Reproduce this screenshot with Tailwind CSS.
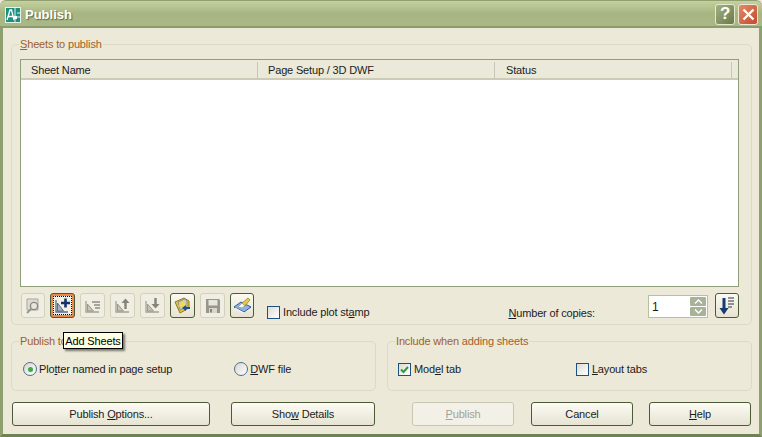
<!DOCTYPE html>
<html>
<head>
<meta charset="utf-8">
<script src="https://cdn.jsdelivr.net/npm/@tailwindcss/browser@4"></script>
</head>
<body class="m-0 overflow-hidden bg-[#ece9d8]">
<div class="relative flex h-[437px] w-[762px] flex-col overflow-hidden font-['Liberation_Sans',Arial,sans-serif] text-[11px] leading-[14px] tracking-[-0.16px] text-[#1c1c1c]">
  <!-- Title bar -->
  <div class="flex h-[28px] shrink-0 items-center rounded-t-[6px] bg-gradient-to-b from-[#c5d2a0] via-[#a6b582] to-[#a9b886] pl-[5px] pr-[4px] border-b-2 border-b-[#8b9c6c] border-t border-t-[#8f9f70]">
    <svg class="mt-[3px] h-[16px] w-[16px] shrink-0" viewBox="0 0 16 16">
      <rect width="16" height="16" fill="#e8f2e4"/>
      <rect x="1" y="1" width="14" height="14" fill="#1d8f82"/>
      <path d="M2 13 L5 3 h1.500 L9 13 M3.500 9.500h4" fill="none" stroke="#fff" stroke-width="1.300"/>
      <path d="M10 1v14M8 10h7M12 6h3" stroke="#dff5ee" stroke-width="1"/>
      <rect x="9" y="9" width="3" height="3" fill="#fff"/>
    </svg>
    <span class="ml-[4px] mt-[3px] text-[13px] font-bold tracking-[0px] text-white [text-shadow:1px_1px_1px_#5c6b40]">Publish</span>
    <div class="ml-auto mt-[1px] flex gap-[3px]">
      <div class="flex h-[21px] w-[20px] items-center justify-center rounded-[3px] border border-[#e3e8cf] bg-gradient-to-br from-[#a3b183] to-[#687a4b] text-[17px] font-bold text-white">?</div>
      <div class="flex h-[21px] w-[20px] items-center justify-center rounded-[3px] border border-[#f0e6d8] bg-gradient-to-br from-[#e48a68] to-[#c2482a]">
        <svg class="h-[15px] w-[15px]" viewBox="0 0 15 15"><path d="M2.500 2.500l10 10M12.500 2.500l-10 10" stroke="#fff" stroke-width="2.400"/></svg>
      </div>
    </div>
  </div>

  <!-- Body -->
  <div class="flex min-h-0 flex-1 flex-col border-x-[3px] border-b-[3px] border-x-[#8fa070] border-b-[#6f8252] pl-[8px] pr-[7px] pt-[8px]">
    <fieldset class="h-[289px] rounded-[5px] border border-[#dcd9c4] pl-[8px] pr-[12px]">
      <legend class="-ml-[1px] h-[16px] px-[1px] leading-[16px] text-[#a0602a]"><u>S</u>heets to publish</legend>
      <!-- list -->
      <div class="mt-[7px] h-[228px] border border-[#8f9f78] bg-white">
        <div class="flex h-[20px] items-center border-b-2 border-b-[#cdcab6] bg-[#ebe9d9] pt-[2px]">
          <div class="w-[237px] border-r border-r-[#c9c7b3] pl-[10px] leading-[16px]">Sheet Name</div>
          <div class="w-[237px] border-r border-r-[#c9c7b3] pl-[10px] leading-[16px]">Page Setup / 3D DWF</div>
          <div class="w-[237px] border-r border-r-[#c9c7b3] pl-[11px] leading-[16px]">Status</div>
        </div>
      </div>
      <!-- toolbar -->
      <div class="mt-[6px] flex h-[25px] items-start">
        <div class="ml-[1px] flex h-[25px] w-[24px] items-center justify-center rounded-[3px] border border-[#d3d0bd] bg-[#f0eee2]">
          <svg class="h-[18px] w-[18px]" viewBox="0 0 18 18"><path d="M3 2h11v11H3z" fill="#dedbd0" stroke="#a9a79b"/><circle cx="10" cy="9" r="3.600" fill="#e8e6dc" stroke="#8a8880" stroke-width="1.400"/><path d="M7 12l-4 4" stroke="#9a988e" stroke-width="2"/></svg>
        </div>
        <div class="ml-[5px] flex h-[25px] w-[25px] items-center justify-center rounded-[3px] border border-[#4d5a38] bg-[#e88a4c] p-[2px]">
          <div class="flex h-full w-full items-center justify-center border border-dotted border-black bg-[#f3f1e6]">
            <svg class="h-[17px] w-[17px]" viewBox="0 0 17 17"><path d="M2 3v12h12" fill="none" stroke="#5a6a88" stroke-width="1.300"/><path d="M3.500 14V6l6 8z" fill="#a9b2c4" stroke="#5c6a88"/><path d="M11.500 1.500v9M7 6h9" stroke="#12326a" stroke-width="2.600"/></svg>
          </div>
        </div>
        <div class="ml-[5px] flex h-[25px] w-[25px] items-center justify-center rounded-[3px] border border-[#d3d0bd] bg-[#f0eee2]">
          <svg class="h-[17px] w-[17px]" viewBox="0 0 17 17"><path d="M2 4v11h13" fill="none" stroke="#a3a192" stroke-width="1.300"/><path d="M3.500 14V7l6 7z" fill="#c6c4b6" stroke="#9b998a"/><path d="M8 5h8M10 8h6M11 11h5" stroke="#8f8d80" stroke-width="1.500"/></svg>
        </div>
        <div class="ml-[5px] flex h-[25px] w-[25px] items-center justify-center rounded-[3px] border border-[#d3d0bd] bg-[#f0eee2]">
          <svg class="h-[17px] w-[17px]" viewBox="0 0 17 17"><path d="M2 4v11h13" fill="none" stroke="#a3a192" stroke-width="1.300"/><path d="M3.500 14V7l6 7z" fill="#c6c4b6" stroke="#9b998a"/><path d="M11.500 12V5" stroke="#85837a" stroke-width="2.400"/><path d="M7.500 6l4-4.500 4 4.500z" fill="#85837a"/></svg>
        </div>
        <div class="ml-[5px] flex h-[25px] w-[25px] items-center justify-center rounded-[3px] border border-[#d3d0bd] bg-[#f0eee2]">
          <svg class="h-[17px] w-[17px]" viewBox="0 0 17 17"><path d="M2 4v11h13" fill="none" stroke="#a3a192" stroke-width="1.300"/><path d="M3.500 14V7l6 7z" fill="#c6c4b6" stroke="#9b998a"/><path d="M11.500 1v7" stroke="#85837a" stroke-width="2.400"/><path d="M7.500 7l4 4.500 4-4.500z" fill="#85837a"/></svg>
        </div>
        <div class="ml-[5px] flex h-[25px] w-[25px] items-center justify-center rounded-[3px] border border-[#4d5a38] bg-gradient-to-b from-[#fbfaf2] to-[#e6e3d2]">
          <svg class="h-[19px] w-[19px]" viewBox="0 0 19 19"><path d="M2 6l9-4 5 3v7l-9 5z" fill="#e8c23a" stroke="#8d7a2a"/><path d="M5 6l7-3 2 2v6l-7 3z" fill="#c8cdb8" stroke="#7f8468" stroke-width=".7"/><path d="M5 10l6-6 2 8z" fill="#f0d860"/><path d="M9 12l4 3v-2h4v-2h-4V9z" fill="#1a4f9c"/></svg>
        </div>
        <div class="ml-[5px] flex h-[25px] w-[25px] items-center justify-center rounded-[3px] border border-[#d3d0bd] bg-[#f0eee2]">
          <svg class="h-[16px] w-[16px]" viewBox="0 0 16 16"><path d="M1 1h13l1 1v13H1z" fill="#98968a"/><rect x="3.500" y="2" width="9" height="5.500" fill="#e8e6dc"/><rect x="4" y="10" width="8" height="5" fill="#d8d6ca"/><rect x="5" y="11" width="2" height="3.500" fill="#85837a"/></svg>
        </div>
        <div class="ml-[5px] flex h-[25px] w-[24px] items-center justify-center rounded-[3px] border border-[#4d5a38] bg-gradient-to-b from-[#fbfaf2] to-[#e6e3d2]">
          <svg class="h-[19px] w-[19px]" viewBox="0 0 19 19"><path d="M1 11l7-5 10 5-7 5z" fill="#8db4e2" stroke="#2c5c9c"/><path d="M2 12l9 5" stroke="#fff"/><path d="M8 8l7-6 2 2-6 7z" fill="#e6c84a" stroke="#8d7a2a" stroke-width=".7"/><path d="M5 11l4-4 3 3-3 2z" fill="#f6f6f0" stroke="#7f8fa8" stroke-width=".7"/></svg>
        </div>
        <div class="ml-[13px] mt-[12px] flex items-center">
          <span class="h-[13px] w-[13px] border border-[#1c5180] bg-gradient-to-br from-[#dcdcd4] to-white"></span>
          <span class="ml-[3px]">Include plot st<u>a</u>mp</span>
        </div>
        <div class="ml-auto mt-[12px] leading-[16px]"><u>N</u>umber of copies:</div>
        <div class="ml-[53px] mt-[2px] flex h-[23px] w-[60px] items-center border border-[#b5c09c] bg-white pl-[3px] pr-[1px]">
          <span class="text-[12px]">1</span>
          <div class="ml-auto flex h-full flex-col justify-center gap-[1px]">
            <div class="flex h-[9px] w-[16px] items-center justify-center rounded-[1px] bg-[#a7b296]"><svg class="h-[5px] w-[9px]" viewBox="0 0 9 5"><path d="M1 4.500l3.500-3.500 3.500 3.500" fill="none" stroke="#fff" stroke-width="1.400"/></svg></div>
            <div class="flex h-[9px] w-[16px] items-center justify-center rounded-[1px] bg-[#a7b296]"><svg class="h-[5px] w-[9px]" viewBox="0 0 9 5"><path d="M1 .5l3.500 3.500 3.500-3.500" fill="none" stroke="#fff" stroke-width="1.400"/></svg></div>
          </div>
        </div>
        <div class="ml-[7px] flex h-[25px] w-[24px] items-center justify-center rounded-[3px] border border-[#4d5a38] bg-gradient-to-b from-[#fbfaf2] to-[#e6e3d2]">
          <svg class="h-[20px] w-[18px]" viewBox="0 0 18 20"><path d="M6 2v11" stroke="#173a70" stroke-width="3"/><path d="M1.500 12h9L6 18.500z" fill="#173a70"/><path d="M10 2h6M10 5h6M10 8h6M10 11h4" stroke="#2c3440" stroke-width="1"/></svg>
        </div>
      </div>
    </fieldset>

    <div class="mt-[8px] flex h-[58px] gap-[11px]">
      <fieldset class="w-[365px] rounded-[5px] border border-[#dcd9c4] pl-[11px]">
        <legend class="-ml-[4px] h-[16px] px-[1px] leading-[16px] text-[#a0602a]">Publish to</legend>
        <div class="mt-[13px] flex items-center">
          <span class="flex h-[14px] w-[14px] items-center justify-center rounded-full border border-[#4d6f94] bg-gradient-to-br from-[#d8d6cc] to-white"><span class="h-[5px] w-[5px] rounded-full bg-[#3fa84a]"></span></span>
          <span class="ml-[2px]">Plo<u>t</u>ter named in page setup</span>
          <span class="ml-[62px] h-[14px] w-[14px] rounded-full border border-[#4d6f94] bg-gradient-to-br from-[#d8d6cc] to-white"></span>
          <span class="ml-[2px]"><u>D</u>WF file</span>
        </div>
      </fieldset>
      <fieldset class="w-[365px] rounded-[5px] border border-[#dcd9c4] pl-[10px]">
        <legend class="-ml-[3px] h-[16px] px-[1px] leading-[16px] text-[#a0602a]">Include when adding sheets</legend>
        <div class="mt-[13px] flex items-center">
          <span class="flex h-[13px] w-[13px] items-center justify-center border border-[#1c5180] bg-gradient-to-br from-[#dcdcd4] to-white"><svg class="h-[11px] w-[11px]" viewBox="0 0 11 11"><path d="M2 5.500l2.500 2.500 4.500-5" fill="none" stroke="#2f9a3a" stroke-width="2"/></svg></span>
          <span class="ml-[3px]">Mod<u>e</u>l tab</span>
          <span class="ml-[115px] h-[13px] w-[13px] border border-[#1c5180] bg-gradient-to-br from-[#dcdcd4] to-white"></span>
          <span class="ml-[3px]"><u>L</u>ayout tabs</span>
        </div>
      </fieldset>
    </div>

    <div class="ml-[1px] mt-[11px] flex h-[24px]">
      <button class="h-[24px] w-[198px] rounded-[3px] border border-[#4d5a38] bg-gradient-to-b from-[#fdfcf4] to-[#e6e3d2]">Publish <u>O</u>ptions...</button>
      <button class="ml-[21px] h-[24px] w-[144px] rounded-[3px] border border-[#4d5a38] bg-gradient-to-b from-[#fdfcf4] to-[#e6e3d2]">Sho<u>w</u> Details</button>
      <button class="ml-[37px] h-[24px] w-[102px] rounded-[3px] border border-[#c9c7b3] bg-[#f3f1e7] text-[#a5a294]"><u>P</u>ublish</button>
      <button class="ml-[17px] h-[24px] w-[102px] rounded-[3px] border border-[#4d5a38] bg-gradient-to-b from-[#fdfcf4] to-[#e6e3d2]">Cancel</button>
      <button class="ml-[16px] h-[24px] w-[102px] rounded-[3px] border border-[#4d5a38] bg-gradient-to-b from-[#fdfcf4] to-[#e6e3d2]"><u>H</u>elp</button>
    </div>
  </div>

  <!-- Tooltip -->
  <div class="absolute left-[63px] top-[332px] flex h-[17px] w-[60px] items-center justify-center whitespace-nowrap border border-black bg-[#ffffe1] text-black shadow-[2px_2px_2px_#77776a]">Add Sheets</div>
</div>
</body>
</html>
